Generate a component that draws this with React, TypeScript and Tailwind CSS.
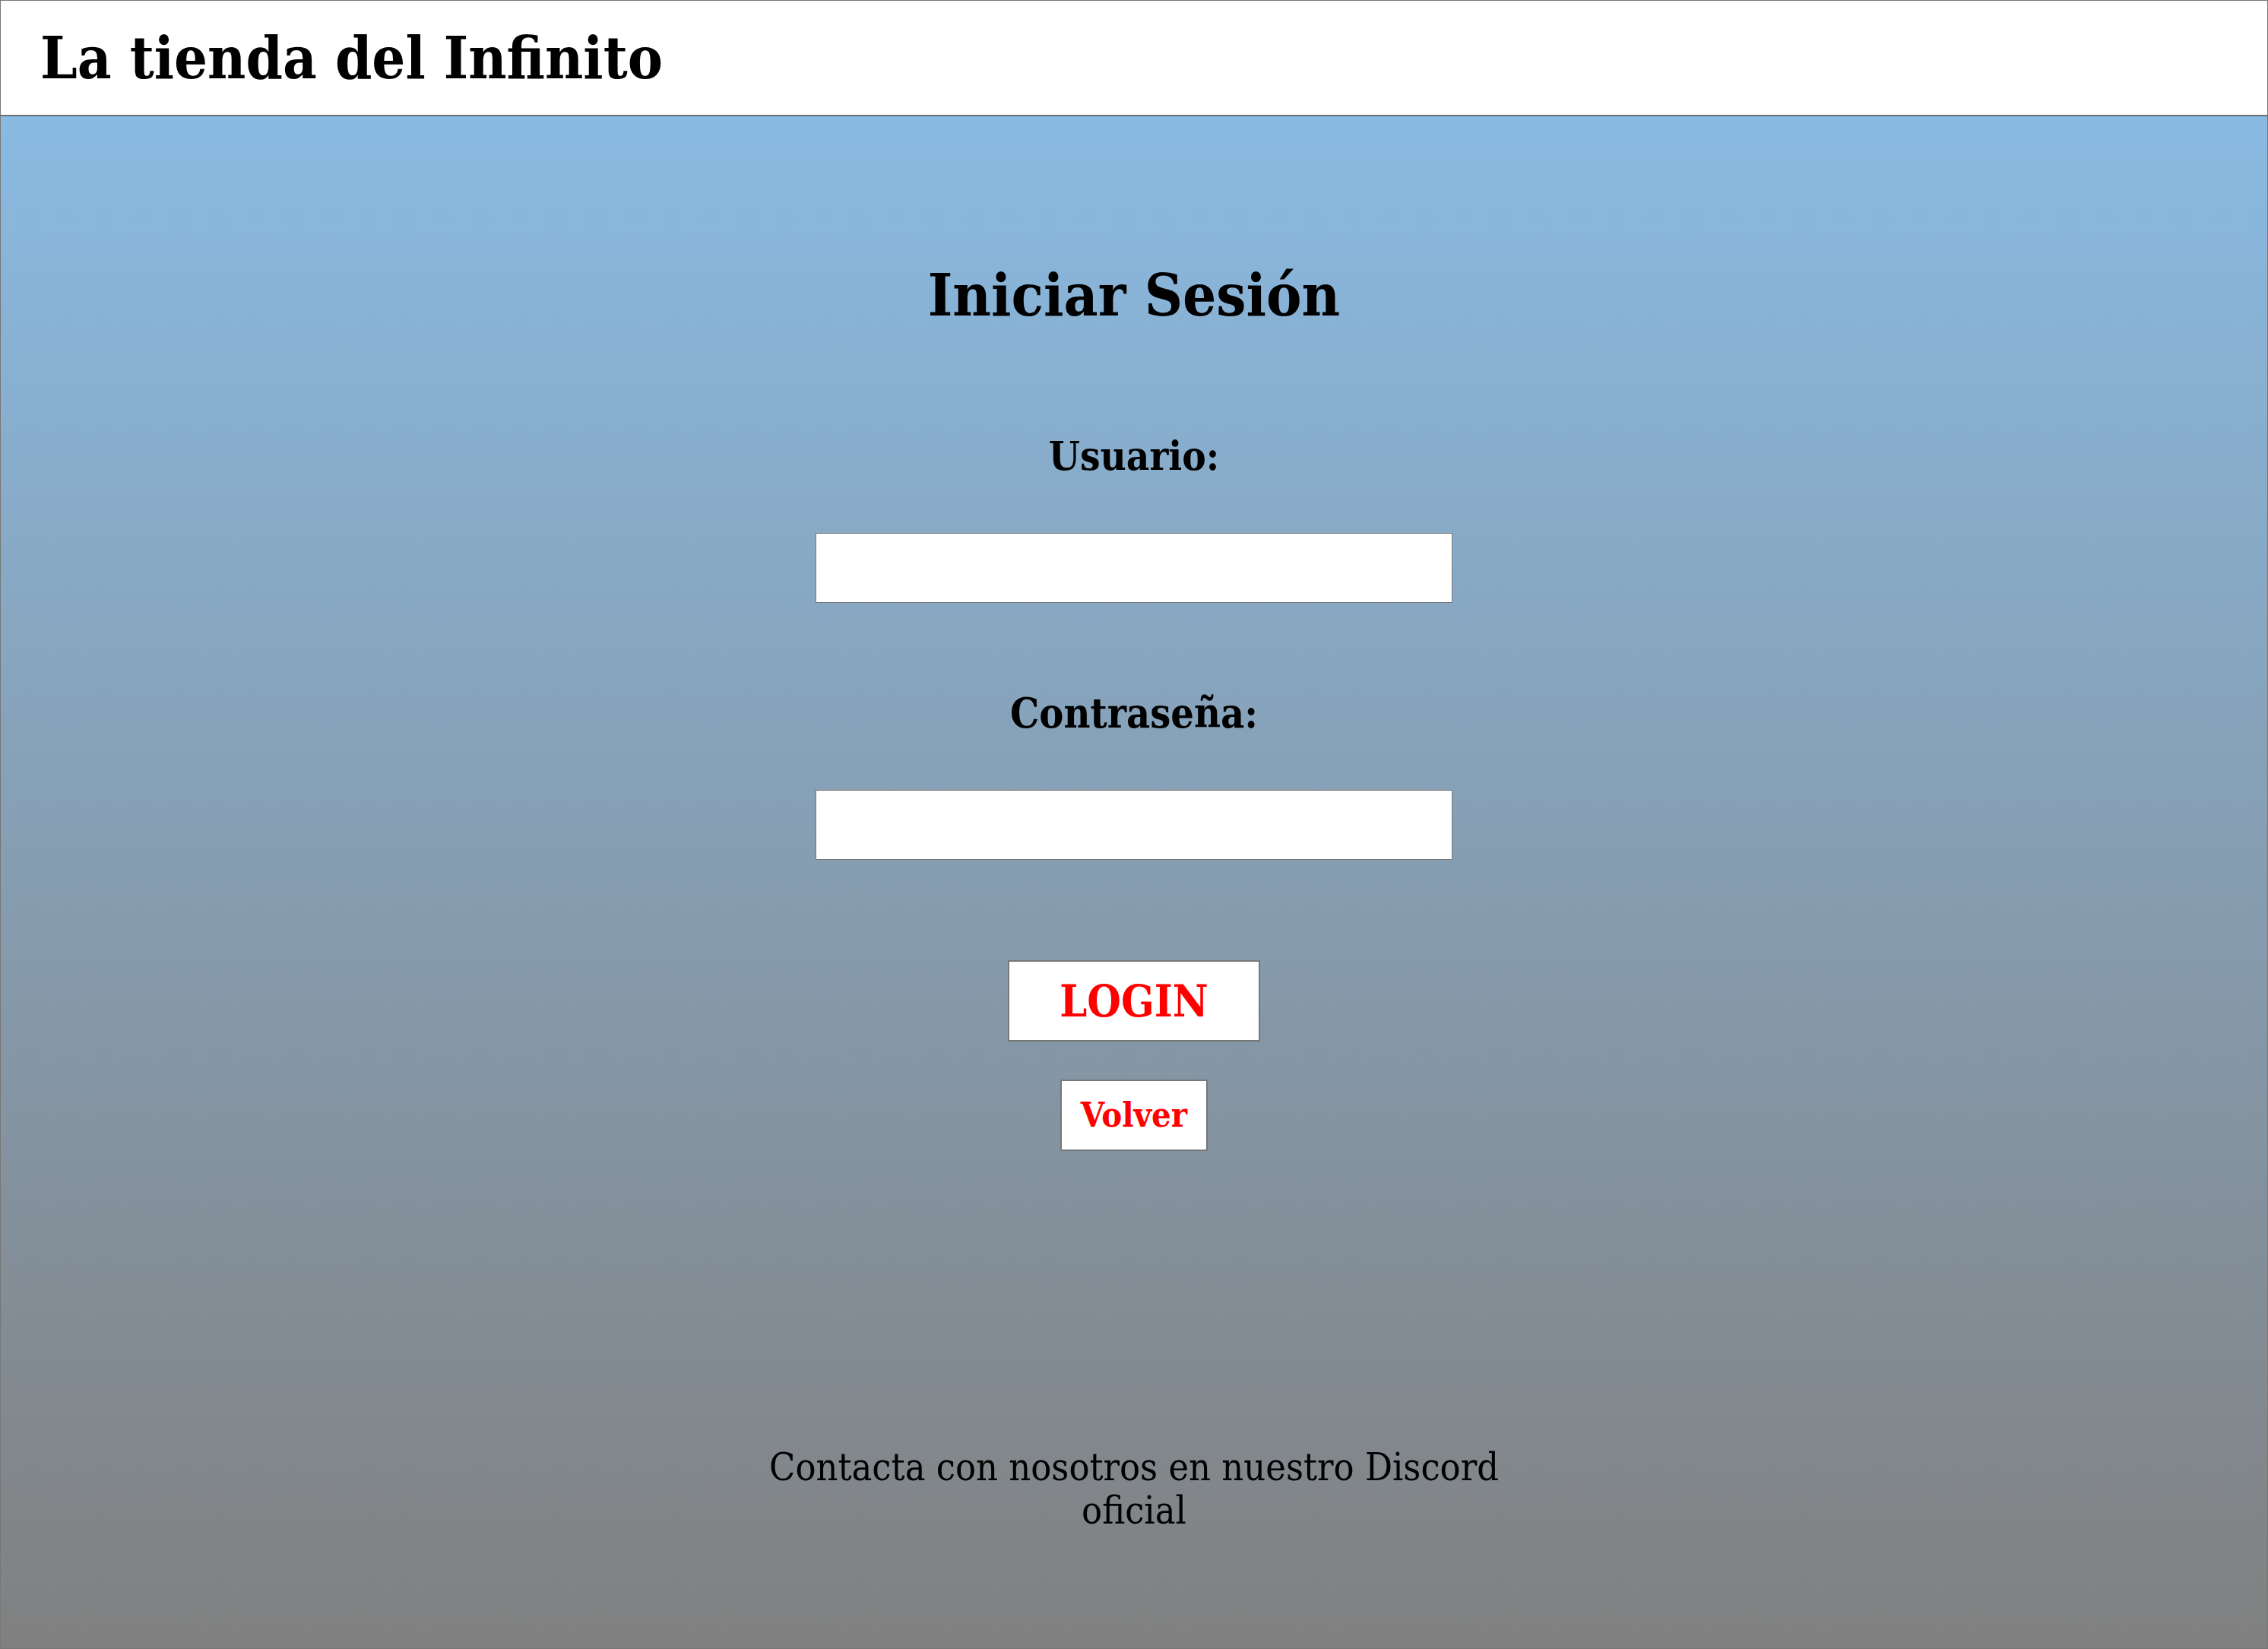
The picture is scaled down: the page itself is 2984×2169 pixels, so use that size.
import React from "react";

const slab = { fontFamily: '"DejaVu Serif Condensed", "DejaVu Serif", serif' };

export default function App() {
  return (
    <div className="w-[2984px] h-[2169px] flex flex-col border border-[#777777] box-border" style={slab}>
      <header className="h-[152px] shrink-0 bg-white border-b-2 border-[#707070] flex items-center pl-[52px]">
        <h1 className="text-[77px] font-bold text-black leading-none">La tienda del Infinito</h1>
      </header>
      <main className="flex-1 flex flex-col items-center bg-gradient-to-b from-[#89bae2] to-[#808080]">
        <h2 className="mt-[196px] text-[77.5px] font-bold leading-none text-black">Iniciar Sesión</h2>
        <label className="mt-[147px] text-[52.5px] font-bold leading-none text-black">Usuario:</label>
        <input className="mt-[75px] w-[838px] h-[92px] bg-white border border-[#777777] outline-none" />
        <label className="mt-[119px] text-[53.5px] font-bold leading-none text-black">Contraseña:</label>
        <input type="password" className="mt-[73px] w-[838px] h-[92px] bg-white border border-[#777777] outline-none" />
        <button className="mt-[132px] w-[332px] h-[107px] bg-white border-2 border-[#777777] text-[#ff0000] text-[57px] font-bold leading-none">LOGIN</button>
        <button className="mt-[50px] w-[194px] h-[94px] bg-white border-2 border-[#777777] text-[#ff0000] text-[45px] font-bold leading-none">Volver</button>
        <p className="mt-[388px] w-[1100px] text-center text-[50px] leading-[57px] text-black">Contacta con nosotros en nuestro Discord oficial</p>
      </main>
    </div>
  );
}
